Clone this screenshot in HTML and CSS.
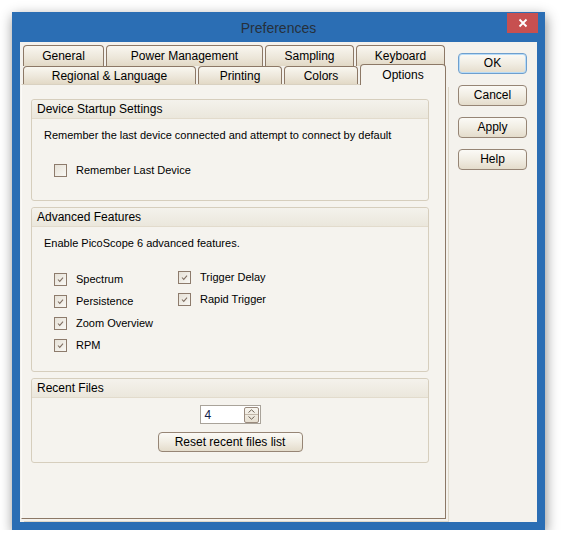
FILE: index.html
```html
<!DOCTYPE html>
<html>
<head>
<meta charset="utf-8">
<title>Preferences</title>
<link rel="stylesheet" href="styles.css">
</head>
<body>
<div class="window">
  <div class="titlebar">
    <span></span>
    <div class="title">Preferences</div>
    <div class="close">
      <svg width="10" height="10" viewBox="0 0 10 10"><path d="M1.5 1.5 L8.5 8.5 M8.5 1.5 L1.5 8.5" stroke="#fff" stroke-width="1.8" fill="none"/></svg>
    </div>
  </div>
  <div class="client">
    <div class="tabs">
      <div class="tabrow row1">
        <div class="tab t-general">General</div>
        <div class="tab t-power">Power Management</div>
        <div class="tab t-sampling">Sampling</div>
        <div class="tab t-keyboard">Keyboard</div>
      </div>
      <div class="tabrow row2">
        <div class="tab t-regional">Regional &amp; Language</div>
        <div class="tab t-printing">Printing</div>
        <div class="tab t-colors">Colors</div>
        <div class="tab t-options selected">Options</div>
      </div>
      <div class="panel">
        <section class="group g-device">
          <div class="group-head">Device Startup Settings</div>
          <div class="group-body">
            <p class="desc">Remember the last device connected and attempt to connect by default</p>
            <div class="check single"><span class="box"></span><span>Remember Last Device</span></div>
          </div>
        </section>
        <section class="group g-advanced">
          <div class="group-head">Advanced Features</div>
          <div class="group-body">
            <p class="desc">Enable PicoScope 6 advanced features.</p>
            <div class="checkgrid">
              <div class="check"><span class="box checked"><svg viewBox="0 0 13 13"><path d="M3.5 6.5 L5.6 8.8 L9.5 4.2" /></svg></span><span>Spectrum</span></div>
              <div class="check"><span class="box checked"><svg viewBox="0 0 13 13"><path d="M3.5 6.5 L5.6 8.8 L9.5 4.2" /></svg></span><span>Persistence</span></div>
              <div class="check"><span class="box checked"><svg viewBox="0 0 13 13"><path d="M3.5 6.5 L5.6 8.8 L9.5 4.2" /></svg></span><span>Zoom Overview</span></div>
              <div class="check"><span class="box checked"><svg viewBox="0 0 13 13"><path d="M3.5 6.5 L5.6 8.8 L9.5 4.2" /></svg></span><span>RPM</span></div>
              <div class="check col2"><span class="box checked"><svg viewBox="0 0 13 13"><path d="M3.5 6.5 L5.6 8.8 L9.5 4.2" /></svg></span><span>Trigger Delay</span></div>
              <div class="check col2"><span class="box checked"><svg viewBox="0 0 13 13"><path d="M3.5 6.5 L5.6 8.8 L9.5 4.2" /></svg></span><span>Rapid Trigger</span></div>
            </div>
          </div>
        </section>
        <section class="group g-recent">
          <div class="group-head">Recent Files</div>
          <div class="group-body center">
            <div class="spinner">
              <span class="spin-value">4</span>
              <span class="spin-btns">
                <span class="spin-up"><svg width="7" height="4" viewBox="0 0 7 4"><path d="M0.5 3.5 L3.5 0.8 L6.5 3.5" fill="none" stroke="#6f6358" stroke-width="1"/></svg></span>
                <span class="spin-down"><svg width="7" height="4" viewBox="0 0 7 4"><path d="M0.5 0.5 L3.5 3.2 L6.5 0.5" fill="none" stroke="#6f6358" stroke-width="1"/></svg></span>
              </span>
            </div>
            <div class="btn reset">Reset recent files list</div>
          </div>
        </section>
      </div>
    </div>
    <div class="buttons">
      <div class="btn dlg default">OK</div>
      <div class="btn dlg">Cancel</div>
      <div class="btn dlg">Apply</div>
      <div class="btn dlg">Help</div>
    </div>
  </div>
</div>
</body>
</html>
```

FILE: styles.css
```css
html, body {
  margin: 0;
  padding: 0;
  background: #ffffff;
}
body {
  font-family: "Liberation Sans", Arial, sans-serif;
  font-size: 11px;
  color: #000;
}
.window {
  margin: 12px 0 0 12px;
  width: 533px;
  height: 518px;
  box-sizing: border-box;
  background: #2b6eb4;
  padding: 0 8px 8px 8px;
  display: flex;
  flex-direction: column;
  box-shadow: 1px 4px 12px rgba(0, 0, 0, 0.45);
}
.titlebar {
  height: 30px;
  display: grid;
  grid-template-columns: 1fr auto 1fr;
  align-items: start;
}
.title {
  font-size: 14px;
  line-height: 30px;
  padding-top: 1px;
  color: #26303b;
}
.close {
  justify-self: end;
  width: 31px;
  height: 20px;
  margin-top: 1px;
  margin-right: -1px;
  background: #c75050;
  display: flex;
  align-items: center;
  justify-content: center;
}
.close svg { display: block; }
.client {
  flex: 1;
  background: #f4f2ed;
  display: flex;
  gap: 12px;
  padding: 3px 10px 0 1px;
}
.tabs {
  width: 425px;
  display: flex;
  flex-direction: column;
}
.tabrow {
  display: flex;
  gap: 2px;
  padding-left: 2px;
}
.row1 { height: 21px; }
.row2 { height: 18px; }
.tab {
  box-sizing: border-box;
  height: 100%;
  border: 1px solid #8c7866;
  border-bottom: none;
  border-radius: 4px 4px 0 0;
  background: linear-gradient(#f9f7f0, #ece6d9 60%, #e2d9c6);
  text-align: center;
  font-size: 12px;
  line-height: 20px;
}
.row2 .tab { line-height: 18px; }
.t-general { width: 81px; }
.t-power { width: 157px; }
.t-sampling { width: 89px; }
.t-keyboard { width: 89px; }
.t-regional { width: 173px; }
.t-printing { width: 84px; }
.t-colors { width: 74px; }
.t-options { width: 86px; }
.tab.selected {
  position: relative;
  z-index: 1;
  margin-top: -2px;
  height: 21px;
  margin-bottom: -1px;
  background: #f5f3ee;
  line-height: 20px;
}
.panel {
  box-sizing: border-box;
  height: 435px;
  background: #f5f3ee;
  border: 1px solid #8c7866;
  border-top-color: #d9d1c1;
  border-left-color: #fbfaf7;
  padding: 14px 16px 0 9px;
  box-shadow: 2px 2px 0 0 #f4f2ed, 3px 3px 0 0 #ded7c8;
}
.group {
  box-sizing: border-box;
  border: 1px solid #d6cebd;
  border-radius: 3px;
  background: #f5f3ee;
}
.g-device { height: 102px; margin-bottom: 6px; }
.g-advanced { height: 165px; margin-bottom: 6px; }
.g-recent { height: 85px; }
.group-head {
  height: 18px;
  line-height: 18px;
  padding-left: 5px;
  font-size: 12px;
  border-bottom: 1px solid #e2dbcc;
  background: linear-gradient(#f4f2ec, #ebe7dc);
  border-radius: 3px 3px 0 0;
}
.group-body {
  padding: 9px 0 0 12px;
}
.group-body.center {
  padding: 7px 0 0 0;
  display: flex;
  flex-direction: column;
  align-items: center;
}
.desc {
  margin: 0;
  line-height: 14px;
  font-size: 11px;
}
.check {
  display: flex;
  align-items: center;
  gap: 9px;
  height: 22px;
  font-size: 11px;
  padding-left: 10px;
}
.check.col2 { margin-top: -2px; }
.check.single { margin-top: 17px; }
.box {
  box-sizing: border-box;
  width: 13px;
  height: 13px;
  border: 1px solid #8d7b6c;
  background: linear-gradient(135deg, #e6e1d7, #f9f8f4);
  display: block;
  flex: none;
}
.box svg {
  display: block;
  width: 11px;
  height: 11px;
}
.box svg path {
  fill: none;
  stroke: #7e6d60;
  stroke-width: 1.2;
}
.checkgrid {
  margin-top: 18px;
  display: grid;
  grid-template-columns: 124px auto;
  grid-template-rows: repeat(4, 22px);
  grid-auto-flow: column;
  justify-content: start;
}
.spinner {
  box-sizing: border-box;
  width: 61px;
  height: 19px;
  border: 1px solid #a9a39a;
  background: #fff;
  display: flex;
  align-items: center;
  justify-content: space-between;
  padding: 0 1px 0 4px;
  font-size: 12px;
  color: #10204a;
}
.spin-btns {
  box-sizing: border-box;
  width: 15px;
  height: 16px;
  border: 1px solid #9a8b7e;
  border-radius: 2px;
  background: linear-gradient(#f8f6f0, #e6dfd1);
  display: flex;
  flex-direction: column;
}
.spin-up, .spin-down {
  flex: 1;
  display: flex;
  align-items: center;
  justify-content: center;
}
.spin-up { border-bottom: 1px solid #c2b7a9; }
.spin-up svg, .spin-down svg { display: block; }
.btn {
  box-sizing: border-box;
  border: 1px solid #968575;
  border-radius: 4px;
  background: linear-gradient(#fbfaf6, #f1ede3 50%, #e4dccb);
  text-align: center;
  font-size: 12px;
}
.reset {
  width: 145px;
  height: 20px;
  line-height: 18px;
  margin-top: 8px;
}
.buttons {
  display: flex;
  flex-direction: column;
  gap: 11px;
  padding-top: 8px;
}
.dlg {
  width: 69px;
  height: 21px;
  line-height: 19px;
}
.dlg.default {
  border-color: #6e9fce;
  box-shadow: inset 0 0 0 1px #b7dbf7;
}
```
